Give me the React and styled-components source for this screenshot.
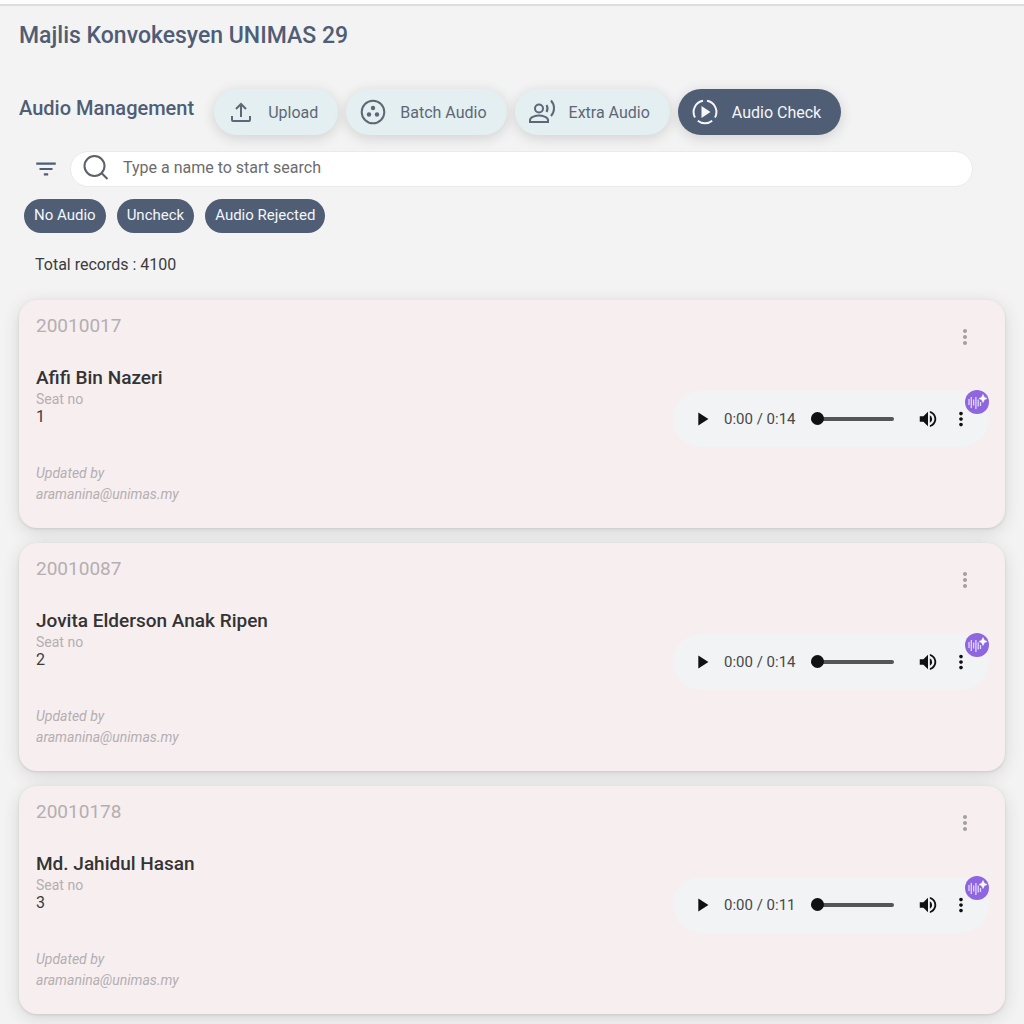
import styled, { createGlobalStyle } from "styled-components";
import { MdFilterList, MdMoreVert, MdPlayArrow, MdVolumeUp } from "react-icons/md";

const GlobalStyle = createGlobalStyle`
  * {
    box-sizing: border-box;
  }

  body {
    margin: 0;
    background: #f3f3f3;
    color: #3c3c3e;
    font-family: Roboto, "Liberation Sans", sans-serif;
    font-size: 16px;
  }

  button {
    border: 0;
    font: inherit;
    cursor: pointer;
  }
`;

const TopBar = styled.div`
  height: 6px;
  background: #fdfdfd;
  border-bottom: 2px solid #dcdddf;
`;

const Page = styled.main`
  padding: 16px 19px;
`;

const PageTitle = styled.h1`
  margin: 0;
  color: #4f5d75;
  font-size: 23px;
  font-weight: 500;
  line-height: 28px;
`;

const Toolbar = styled.div`
  display: flex;
  align-items: center;
  gap: 20px;
  margin-top: 39px;
`;

const SectionTitle = styled.h2`
  margin: 0;
  padding-bottom: 8px;
  color: #4f5d75;
  font-size: 20px;
  font-weight: 500;
  line-height: 24px;
`;

const ActionGroup = styled.div`
  display: flex;
  gap: 8px;
`;

const ActionButton = styled.button`
  display: flex;
  align-items: center;
  gap: 13px;
  height: 46px;
  padding: 0 20px 0 13px;
  border-radius: 23px;
  background: ${(props) => (props.$active ? "#4f5d75" : "#e4eff1")};
  color: ${(props) => (props.$active ? "#f4f6fa" : "#5f6776")};
  box-shadow: 0 3px 14px rgba(0, 0, 0, 0.14);
`;

const ActionIcon = styled.svg`
  width: 28px;
  height: 28px;
  fill: none;
  stroke: currentColor;
  stroke-width: 2;
`;

const SearchRow = styled.div`
  display: flex;
  align-items: center;
  gap: 11px;
  margin-top: 16px;
  padding: 0 32px 0 14px;
`;

const FilterButton = styled.button`
  display: flex;
  padding: 0;
  background: none;
  color: #4f5d75;
  font-size: 26px;
`;

const SearchBox = styled.label`
  display: flex;
  flex: 1;
  align-items: center;
  gap: 13px;
  height: 36px;
  padding: 0 11px 4px;
  border: 1px solid #eaeaea;
  border-radius: 18px;
  background: #ffffff;
  color: #5b6069;
`;

const SearchInput = styled.input`
  flex: 1;
  min-width: 0;
  padding: 0;
  border: 0;
  outline: 0;
  background: none;
  color: #3c3c3e;
  font: inherit;

  &::placeholder {
    color: #6c6c6e;
    opacity: 1;
  }
`;

const ChipRow = styled.div`
  display: flex;
  gap: 11px;
  margin-top: 12px;
  padding-left: 5px;
`;

const Chip = styled.button`
  height: 34px;
  padding: 0 10px 2px;
  border-radius: 17px;
  background: #4f5d75;
  color: #f4f6fa;
  font-size: 15px;
`;

const Total = styled.p`
  margin: 22px 0 25px;
  padding-left: 16px;
  line-height: 20px;
`;

const CardList = styled.ul`
  display: grid;
  gap: 15px;
  margin: 0;
  padding: 0;
  list-style: none;
`;

const Card = styled.li`
  display: flex;
  justify-content: space-between;
  padding: 14px 16px 23px 17px;
  border-radius: 18px;
  background: #f7eeef;
  box-shadow:
    0 1px 3px rgba(0, 0, 0, 0.1),
    0 4px 18px rgba(0, 0, 0, 0.12);
`;

const CardSide = styled.div`
  display: flex;
  flex-direction: column;
  align-items: flex-end;
  gap: 42px;
  padding-top: 11px;
`;

const StudentId = styled.p`
  margin: 0 0 28px;
  color: #b3afb2;
  font-size: 19px;
  line-height: 24px;
`;

const StudentName = styled.h3`
  margin: 0;
  color: #333335;
  font-size: 19px;
  font-weight: 500;
  line-height: 24px;
`;

const SeatLabel = styled.p`
  margin: 0;
  color: #b3afb2;
  font-size: 14px;
  line-height: 18px;
`;

const SeatNumber = styled.p`
  margin: 0 0 37px;
  line-height: 18px;
`;

const Updated = styled.p`
  margin: 0;
  color: #b3afb2;
  font-size: 14px;
  font-style: italic;
  line-height: 21px;
`;

const IconButton = styled.button`
  display: flex;
  padding: 0;
  background: none;
  color: ${(props) => props.$color || "#111111"};
  font-size: ${(props) => props.$size || 22}px;
`;

const MenuSlot = styled.div`
  padding-right: 12px;
`;

const Player = styled.div`
  position: relative;
  display: flex;
  align-items: center;
  gap: 11px;
  width: 316px;
  height: 56px;
  padding: 0 17px 0 18px;
  border-radius: 28px;
  background: #f1f3f4;
`;

const Time = styled.span`
  width: 76px;
  color: #48484a;
  font-size: 15px;
  white-space: nowrap;
`;

const Seek = styled.input`
  flex: 1;
  min-width: 0;
  height: 14px;
  margin: 0 12px 0 0;
  background: none;
  appearance: none;

  &::-webkit-slider-runnable-track {
    height: 4px;
    border-radius: 2px;
    background: #555557;
  }

  &::-webkit-slider-thumb {
    width: 13px;
    height: 13px;
    margin-top: -5px;
    border-radius: 50%;
    background: #111111;
    appearance: none;
  }
`;

const EnhanceBadge = styled.button`
  position: absolute;
  top: -1px;
  right: 0;
  display: flex;
  padding: 0;
  border-radius: 50%;
  background: #8d66e0;
`;

const UploadIcon = () => (
  <ActionIcon viewBox="0 0 28 28" aria-hidden="true">
    <path d="M14 19V6M9 11l5-5 5 5M5 18v4q0 1 1 1h16q1 0 1-1v-4" />
  </ActionIcon>
);

const BatchIcon = () => (
  <ActionIcon viewBox="0 0 28 28" aria-hidden="true">
    <circle cx="14" cy="14" r="11.3" />
    <g fill="currentColor" stroke="none">
      <circle cx="14" cy="10" r="2.2" />
      <circle cx="10" cy="16.5" r="2.2" />
      <circle cx="18" cy="16.5" r="2.2" />
    </g>
  </ActionIcon>
);

const ExtraIcon = () => (
  <ActionIcon viewBox="0 0 28 28" aria-hidden="true">
    <circle cx="11" cy="10.5" r="4" />
    <path d="M2 24v-2c0-3 6-4.500 9-4.500s9 1.500 9 4.500v2zM18.500 7c1.300 2.200 1.300 4.800 0 7M23 2.500c4 4.500 4 11 0 15.500" />
  </ActionIcon>
);

const CheckIcon = () => (
  <ActionIcon viewBox="0 0 28 28" aria-hidden="true">
    <path d="M16 2.800A11.400 11.400 0 0 1 24 19.500M12 2.800A11.400 11.400 0 0 0 4 19.500M6.800 22.800a11.400 11.400 0 0 0 14.400 0" />
    <path d="M10.500 8v12l9-6z" fill="currentColor" stroke="none" />
  </ActionIcon>
);

const SearchIcon = () => (
  <ActionIcon viewBox="0 0 28 28" aria-hidden="true">
    <circle cx="12.500" cy="13" r="10" />
    <path d="M19.700 20.200l5.800 5.800" />
  </ActionIcon>
);

const EnhanceIcon = () => (
  <svg width="24" height="24" viewBox="0 0 24 24" fill="none" stroke="#e3d6ff" strokeWidth="1.300" aria-hidden="true">
    <path d="M4 9v6M6.300 7v11M8.600 9.500v6M10.900 7v12M13.200 9.500v7M15.500 12v4" />
    <path d="M18 4.500l1.300 2.700 2.700 1.300-2.700 1.300-1.300 2.700-1.300-2.700-2.700-1.300 2.700-1.300z" fill="#ffffff" stroke="#ffffff" strokeWidth="0.500" />
  </svg>
);

const actions = [
  { label: "Upload", Icon: UploadIcon },
  { label: "Batch Audio", Icon: BatchIcon },
  { label: "Extra Audio", Icon: ExtraIcon },
  { label: "Audio Check", Icon: CheckIcon, active: true },
];

const filters = ["No Audio", "Uncheck", "Audio Rejected"];

const students = [
  { id: "20010017", name: "Afifi Bin Nazeri", seat: 1, length: "0:14" },
  { id: "20010087", name: "Jovita Elderson Anak Ripen", seat: 2, length: "0:14" },
  { id: "20010178", name: "Md. Jahidul Hasan", seat: 3, length: "0:11" },
];

const AudioPlayer = ({ length, name }) => (
  <Player>
    <IconButton aria-label="Play">
      <MdPlayArrow />
    </IconButton>
    <Time>0:00 / {length}</Time>
    <Seek type="range" min="0" max="100" defaultValue="0" aria-label={`Seek ${name}`} />
    <IconButton aria-label="Mute">
      <MdVolumeUp />
    </IconButton>
    <IconButton aria-label="Player options">
      <MdMoreVert />
    </IconButton>
    <EnhanceBadge aria-label="Enhance audio">
      <EnhanceIcon />
    </EnhanceBadge>
  </Player>
);

const StudentCard = ({ student }) => (
  <Card>
    <div>
      <StudentId>{student.id}</StudentId>
      <StudentName>{student.name}</StudentName>
      <SeatLabel>Seat no</SeatLabel>
      <SeatNumber>{student.seat}</SeatNumber>
      <Updated>Updated by</Updated>
      <Updated>aramanina@unimas.my</Updated>
    </div>
    <CardSide>
      <MenuSlot>
        <IconButton $color="#a39fa2" $size={24} aria-label="Record options">
          <MdMoreVert />
        </IconButton>
      </MenuSlot>
      <AudioPlayer length={student.length} name={student.name} />
    </CardSide>
  </Card>
);

const App = () => {
  return (
    <>
      <GlobalStyle />
      <TopBar />
      <Page>
        <PageTitle>Majlis Konvokesyen UNIMAS 29</PageTitle>
        <Toolbar>
          <SectionTitle>Audio Management</SectionTitle>
          <ActionGroup>
            {actions.map(({ label, Icon, active }) => (
              <ActionButton key={label} $active={active}>
                <Icon />
                {label}
              </ActionButton>
            ))}
          </ActionGroup>
        </Toolbar>
        <SearchRow>
          <FilterButton aria-label="Filter">
            <MdFilterList />
          </FilterButton>
          <SearchBox>
            <SearchIcon />
            <SearchInput type="text" placeholder="Type a name to start search" aria-label="Search by name" />
          </SearchBox>
        </SearchRow>
        <ChipRow>
          {filters.map((filter) => (
            <Chip key={filter}>{filter}</Chip>
          ))}
        </ChipRow>
        <Total>Total records : 4100</Total>
        <CardList>
          {students.map((student) => (
            <StudentCard key={student.id} student={student} />
          ))}
        </CardList>
      </Page>
    </>
  );
};

export default App;
